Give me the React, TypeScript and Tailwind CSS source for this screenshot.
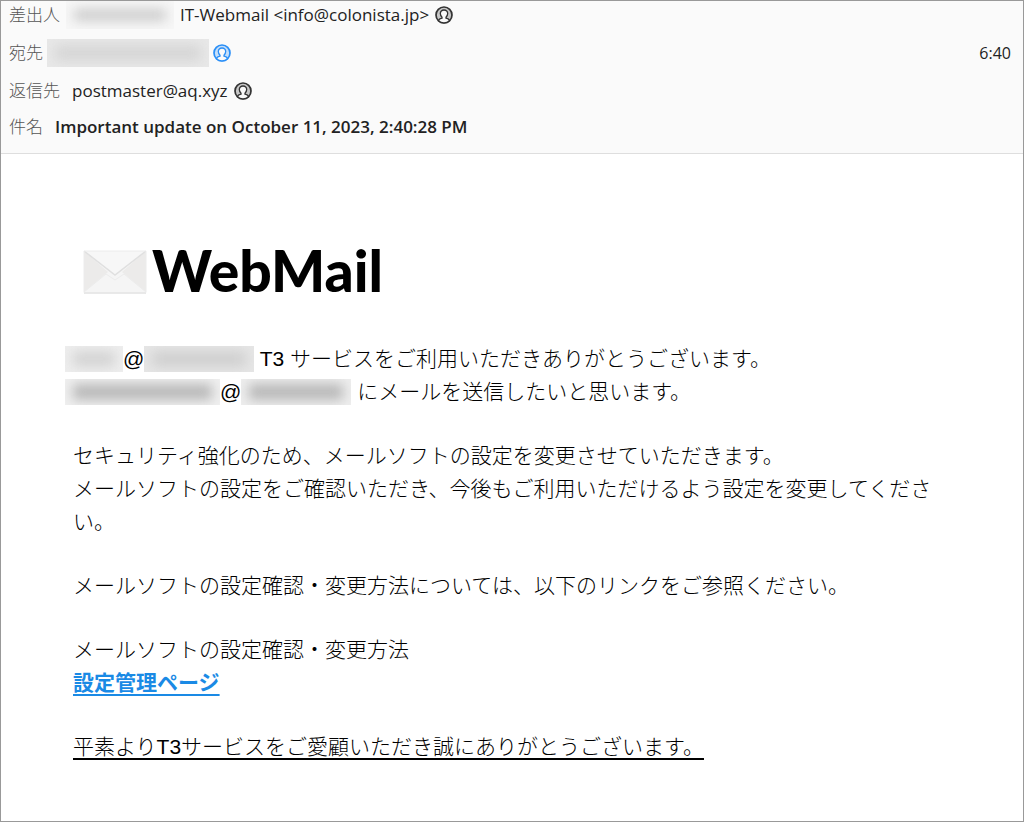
import clsx from "clsx";

interface RedactedProps {
  className?: string;
  inkClassName?: string;
}

const Redacted = ({ className, inkClassName }: RedactedProps) => (
  <span
    aria-hidden="true"
    className={clsx(
      "inline-flex shrink-0 items-center overflow-hidden px-2",
      className
    )}
  >
    <span className={clsx("block w-full blur-[6px]", inkClassName)} />
  </span>
);

const ContactIcon = () => (
  <svg viewBox="0 0 18 18" className="h-[18px] w-[18px]" aria-hidden="true">
    <circle
      cx="9"
      cy="9"
      r="8"
      fill="currentColor"
      fillOpacity="0.25"
      stroke="currentColor"
      strokeWidth="1.7"
    />
    <path
      d="M3.500 14.700c.4-1.700 1.800-2.300 3.500-2.600v-.9C6 10.200 5.300 9.100 5.300 7.600 5.300 5.400 6.800 4 9 4s3.700 1.400 3.700 3.600c0 1.500-.7 2.600-1.700 3.600v.9c1.700.3 3.100.9 3.500 2.600C13 16.200 11 16.900 9 16.900s-4-.7-5.500-2.200z"
      fill="#fafafa"
      stroke="currentColor"
      strokeWidth="1.300"
    />
  </svg>
);

const ContactButton = ({ label, blue }: { label: string; blue?: boolean }) => (
  <button
    type="button"
    aria-label={label}
    className={clsx("shrink-0", blue ? "text-[#2a8ff7]" : "text-[#333333]")}
  >
    <ContactIcon />
  </button>
);

const Logo = () => (
  <div className="flex items-center gap-1 px-[9px]">
    <svg viewBox="0 0 66 46" className="mt-1 h-[46px] w-[66px]" aria-hidden="true">
      <rect x="2" y="2" width="62" height="42" rx="1" fill="#f5f5f5" />
      <path d="M2 2l24 21L2 43z" fill="#ecebea" />
      <path d="M64 2L40 23l24 20z" fill="#ecebea" />
      <path d="M2 43l22-18 9 6 9-6 22 18" fill="#f5f5f5" stroke="#ececec" />
      <path d="M2 2l31 24L64 2z" fill="#f7f7f7" />
      <path d="M2 2l31 24L64 2" fill="none" stroke="#e0e0e0" strokeWidth="1.500" />
      <path d="M2 44h62" stroke="#dedede" strokeWidth="1.500" />
      <rect x="2" y="2" width="62" height="42" rx="1" fill="none" stroke="#ececec" />
    </svg>
    <span className="font-['Lato',sans-serif] text-[57px] leading-[56px] font-black text-black">
      WebMail
    </span>
  </div>
);

export default function App() {
  return (
    <div className="min-h-screen border border-[#999999] bg-white">
      <header className="flex flex-col border-b border-[#dedede] bg-[#fafafa] px-2 pb-2 font-['Open_Sans','Noto_Sans_CJK_JP',sans-serif] text-[17px] text-[#222222]">
        <div className="flex h-7 items-center">
          <span className="font-light text-[#555555]">差出人</span>
          <Redacted className="mx-[6px] h-7 w-[108px] bg-[#f7f7f7]" inkClassName="h-3 bg-[#cccccc]" />
          <span>IT-Webmail &lt;info@colonista.jp&gt;</span>
          <span className="ml-[6px] flex">
            <ContactButton label="IT-Webmail" />
          </span>
        </div>
        <div className="mt-1 flex h-10 items-center">
          <span className="font-light text-[#555555]">宛先</span>
          <Redacted className="mx-1 h-7 w-[162px] bg-[#e8e8e8]" inkClassName="h-4 bg-[#d6d6d6]" />
          <ContactButton label="宛先" blue />
          <time className="ml-auto pr-1 text-base">6:40</time>
        </div>
        <div className="flex h-9 items-center gap-3">
          <span className="font-light text-[#555555]">返信先</span>
          <span className="flex items-center gap-[6px]">
            postmaster@aq.xyz
            <ContactButton label="postmaster@aq.xyz" />
          </span>
        </div>
        <div className="flex h-9 items-center gap-3">
          <span className="font-light text-[#555555]">件名</span>
          <h1 className="font-semibold">
            Important update on October 11, 2023, 2:40:28 PM
          </h1>
        </div>
      </header>

      <main className="flex flex-col px-[72px] pt-[88px] pb-14">
        <Logo />
        <div className="mt-11 flex flex-col gap-[31px] font-['Liberation_Sans','Noto_Sans_CJK_JP',sans-serif] text-[21px] leading-[33px] font-light text-black">
          <div>
            <p className="-ml-2 flex items-center whitespace-pre">
              <Redacted className="h-[26px] w-[58px] bg-[#eeeeee]" inkClassName="h-4 bg-[#d4d4d4]" />
              @
              <Redacted className="h-[26px] w-[110px] bg-[#e6e6e6]" inkClassName="h-4 bg-[#d0d0d0]" />
              <span> T3 サービスをご利用いただきありがとうございます。</span>
            </p>
            <p className="-ml-2 flex items-center whitespace-pre">
              <Redacted className="h-[26px] w-[155px] bg-[#f0f0f0]" inkClassName="h-4 bg-[#b8b8b8]" />
              @
              <Redacted className="h-[26px] w-[110px] bg-[#eeeeee]" inkClassName="h-4 bg-[#b8b8b8]" />
              <span> にメールを送信したいと思います。</span>
            </p>
          </div>
          <p>
            セキュリティ強化のため、メールソフトの設定を変更させていただきます。
            <br />
            メールソフトの設定をご確認いただき、今後もご利用いただけるよう設定を変更してください。
          </p>
          <p>
            メールソフトの設定確認・変更方法については、以下のリンクをご参照ください。
          </p>
          <p>
            メールソフトの設定確認・変更方法
            <br />
            <a
              href="#settings"
              className="font-bold text-[#1a8ae5] underline decoration-2 underline-offset-4"
            >
              設定管理ページ
            </a>
          </p>
          <p className="underline decoration-2 underline-offset-4">
            平素よりT3サービスをご愛顧いただき誠にありがとうございます。
          </p>
        </div>
      </main>
    </div>
  );
}
